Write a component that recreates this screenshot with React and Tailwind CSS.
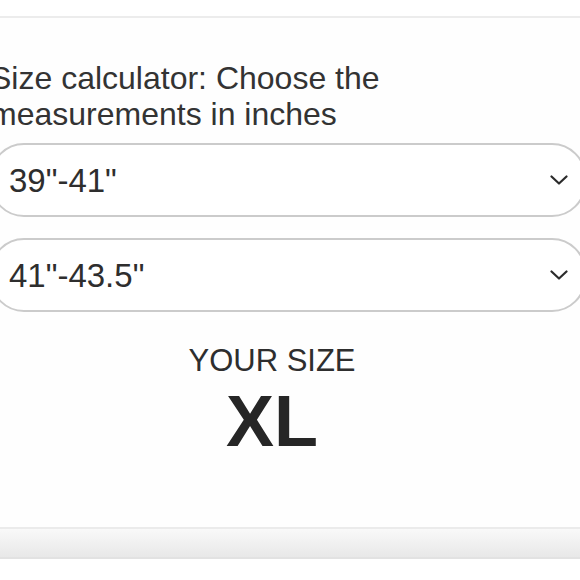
import React from "react";

function Chevron() {
  return (
    <svg width="18" height="10" viewBox="0 0 18 10" fill="none" className="shrink-0">
      <path d="M1.5 1.5l7.5 7 7.5-7" stroke="#2b2b2b" strokeWidth="2.2" strokeLinecap="round" strokeLinejoin="round" />
    </svg>
  );
}

function SelectBox({ value }) {
  return (
    <div className="flex h-[74px] items-center justify-between rounded-[34px] border-2 border-[#cbcbcb] bg-white pl-[17px] pr-[16px]">
      <span className="text-[33px] leading-none text-[#2e2e2e]">{value}</span>
      <Chevron />
    </div>
  );
}

export default function App() {
  return (
    <div
      className="h-[580px] w-[580px] overflow-hidden bg-white"
      style={{ fontFamily: '"Liberation Sans", Arial, sans-serif' }}
    >
      <div className="h-[16px] bg-white" />
      <div className="h-[2px] bg-[#ececec]" />

      <div className="ml-[-10px] w-[596px] bg-[#fefefe]">
        <div className="pt-[42px]">
          <p className="whitespace-nowrap pl-0 text-[32px] leading-[36px] text-[#333]">
            Size calculator: Choose the
            <br />
            measurements in inches
          </p>
        </div>

        <div className="mt-[11px] flex flex-col gap-[21px]">
          <SelectBox value={'39"-41"'} />
          <SelectBox value={'41"-43.5"'} />
        </div>

        <div className="flex flex-col items-center pr-[32px] pt-[32px]">
          <div className="text-[31px] leading-[34px] text-[#2e2e2e]">YOUR SIZE</div>
          <div className="mt-[8px] text-[72px] font-bold leading-[70px] text-[#262626]">XL</div>
        </div>

        <div className="h-[71px]" />
      </div>

      <div className="h-[2px] bg-[#ebebeb]" />
      <div className="h-[28px] bg-gradient-to-b from-[#f9f9f9] to-[#e8e8e8]" />
      <div className="h-[2px] bg-[#e2e2e2]" />
      <div className="h-[40px] bg-white" />
    </div>
  );
}
